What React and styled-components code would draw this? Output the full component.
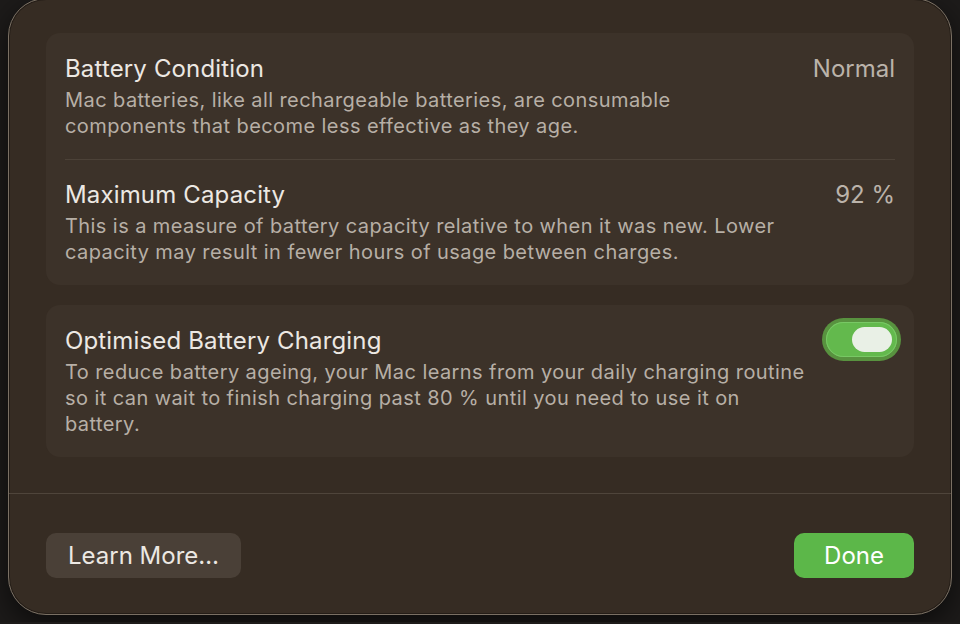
import styled, { createGlobalStyle } from 'styled-components'

const GlobalStyle = createGlobalStyle`
  html, body {
    margin: 0;
    padding: 0;
    background: #1d1b1a;
    overflow: hidden;
  }
  body {
    font-family: Inter, "Noto Sans", "Liberation Sans", sans-serif;
    -webkit-font-smoothing: antialiased;
  }
`

const Backdrop = styled.div`
  width: 960px;
  height: 624px;
  padding-left: 8px;
  box-sizing: border-box;
`

const Sheet = styled.div`
  width: 944px;
  height: 617px;
  margin-top: -2px;
  box-sizing: border-box;
  display: flex;
  flex-direction: column;
  background: #362c23;
  border: 1px solid #7a7064;
  border-radius: 38px;
  box-shadow: inset 0 0 0 1px #241d17, 0 10px 30px rgba(0, 0, 0, 0.6);
`

const Body = styled.div`
  display: flex;
  flex-direction: column;
  gap: 20px;
  padding: 34px 37px 36px;
`

const Card = styled.div`
  background: #3c3229;
  border-radius: 14px;
  padding: 1px 19px 0;
`

const Row = styled.div`
  display: flex;
  align-items: flex-start;
  justify-content: space-between;
  gap: 20px;
  padding: 20px 0;
  & + & {
    border-top: 1px solid #4c4238;
  }
`

const Text = styled.div`
  display: flex;
  flex-direction: column;
  gap: 3px;
  max-width: ${(p) => p.$max || 715}px;
`

const Title = styled.div`
  font-size: 24px;
  line-height: 30px;
  color: #ece8e3;
  letter-spacing: 0.15px;
`

const Desc = styled.div`
  font-size: 20px;
  line-height: 26px;
  color: #b7afa6;
  letter-spacing: 0.42px;
`

const Value = styled.div`
  font-size: 24px;
  line-height: 30px;
  color: #bbb3aa;
  white-space: nowrap;
`

const Switch = styled.div`
  flex: none;
  width: 71px;
  height: 35px;
  margin: -4px -2px 0 0;
  box-sizing: border-box;
  border-radius: 18px;
  background: #63b94d;
  box-shadow: inset 0 0 0 1px #78c865, 0 0 0 4px #58923f;
  display: flex;
  justify-content: ${(p) => (p.$on ? 'flex-end' : 'flex-start')};
  align-items: center;
  padding: 0 5px;
`

const Knob = styled.div`
  width: 40px;
  height: 25px;
  border-radius: 13px;
  background: #e9f0e6;
`

const Divider = styled.div`
  height: 1px;
  background: #4f453b;
`

const Footer = styled.div`
  display: flex;
  justify-content: space-between;
  align-items: center;
  padding: 39px 37px 0;
`

const Button = styled.button`
  height: 45px;
  padding: 0 ${(p) => p.$pad || 22}px;
  border: none;
  border-radius: 10px;
  font-family: inherit;
  font-size: 24px;
  color: ${(p) => (p.$primary ? '#ffffff' : '#ece8e3')};
  background: ${(p) => (p.$primary ? '#5cb749' : '#4a4037')};
  cursor: pointer;
`

export default function App() {
  return (
    <Backdrop>
      <GlobalStyle />
      <Sheet>
        <Body>
          <Card>
            <Row>
              <Text>
                <Title>Battery Condition</Title>
                <Desc>
                  Mac batteries, like all rechargeable batteries, are consumable components that
                  become less effective as they age.
                </Desc>
              </Text>
              <Value>Normal</Value>
            </Row>
            <Row>
              <Text>
                <Title>Maximum Capacity</Title>
                <Desc>
                  This is a measure of battery capacity relative to when it was new. Lower capacity
                  may result in fewer hours of usage between charges.
                </Desc>
              </Text>
              <Value>92 %</Value>
            </Row>
          </Card>
          <Card>
            <Row>
              <Text $max={745}>
                <Title>Optimised Battery Charging</Title>
                <Desc>
                  To reduce battery ageing, your Mac learns from your daily charging routine so it
                  can wait to finish charging past 80 % until you need to use it on battery.
                </Desc>
              </Text>
              <Switch $on>
                <Knob />
              </Switch>
            </Row>
          </Card>
        </Body>
        <Divider />
        <Footer>
          <Button>Learn More…</Button>
          <Button $primary $pad={30}>Done</Button>
        </Footer>
      </Sheet>
    </Backdrop>
  )
}
